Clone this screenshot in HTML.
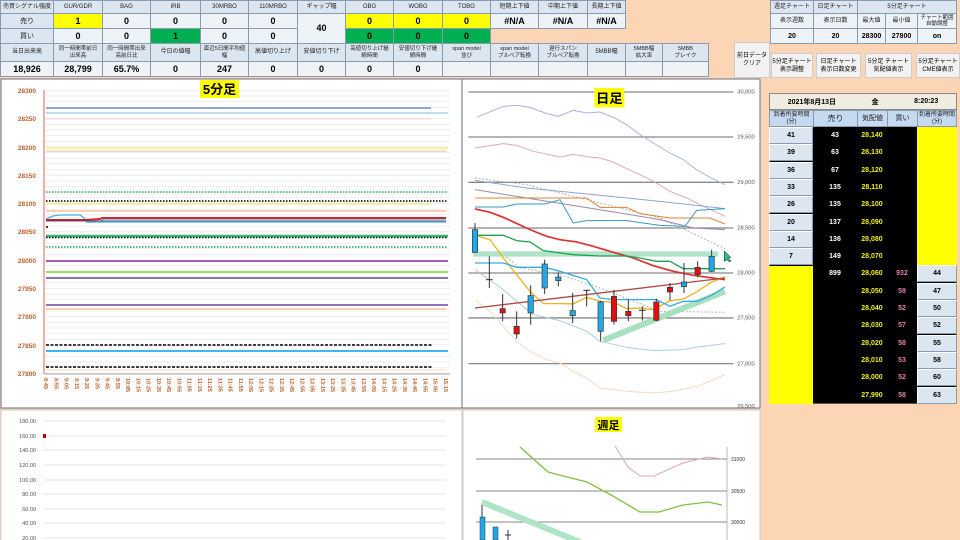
<!DOCTYPE html>
<html><head><meta charset="utf-8"><style>
*{margin:0;padding:0;box-sizing:border-box}
body{width:960px;height:540px;overflow:hidden;background:#fcd5b4;font-family:"Liberation Sans","Noto Sans CJK JP",sans-serif;position:relative}
.c{position:absolute;border:1px solid #8a9ab0;background:#dce6f1;display:flex;align-items:center;justify-content:center;text-align:center;font-size:6px;line-height:7px;color:#222;overflow:hidden}
.v{font-size:9px;font-weight:bold;color:#000}
.y{background:#ffff00}.g{background:#00b050}.w{background:#eef3f8}
.btn{position:absolute;background:#f2f2f2;border:1px solid #ccc;font-size:6px;line-height:8px;display:flex;align-items:center;justify-content:center;text-align:center}
.ob{position:absolute;font-size:7px;font-weight:bold;display:flex;align-items:center;justify-content:center}
.s{font-size:5.5px;line-height:6.5px}
</style></head><body>
<svg width="960" height="540" style="position:absolute;left:0;top:0">
<defs>
<pattern id="gd" x="0" y="90" width="4" height="5.66" patternUnits="userSpaceOnUse"><line x1="0" y1="0.3" x2="4" y2="0.3" stroke="#e2e2e2" stroke-width="0.6"/></pattern>
</defs>
<rect x="1" y="79" width="461" height="329" fill="#fff" stroke="#6a7080"/>
<rect x="45" y="90" width="405" height="284" fill="url(#gd)"/>
<line x1="44" y1="90" x2="44" y2="374" stroke="#e06060" stroke-width="1"/>
<line x1="44" y1="374" x2="450" y2="374" stroke="#aaa"/>
<g stroke-width="1.6" fill="none">
<line x1="46" y1="108" x2="431" y2="108" stroke="#7090c0"/>
<line x1="46" y1="113" x2="448" y2="113" stroke="#a8d0f0"/>
<line x1="46" y1="119" x2="431" y2="119" stroke="#f0c8e8" stroke-width="1"/>
<line x1="46" y1="148" x2="448" y2="148" stroke="#f8f080"/>
<line x1="46" y1="151" x2="446" y2="151" stroke="#f4c8a0" stroke-width="1.2"/>
<line x1="46" y1="192" x2="448" y2="192" stroke="#20b060" stroke-dasharray="1.5,1.5"/>
<line x1="46" y1="201" x2="448" y2="201" stroke="#000" stroke-dasharray="1.5,1.5"/>
<line x1="46" y1="204" x2="431" y2="204" stroke="#f0f090"/>
<line x1="46" y1="211" x2="446" y2="211" stroke="#f4c0a0"/>
<polyline points="46,219 53,216 60,215 80,215 84,218 88,222 100,222 104,219 446,219" stroke="#40b0e8" stroke-width="1.3"/>
<polyline points="46,220 86,220 100,219 102,218 446,218" stroke="#e02020" stroke-width="2"/>
<line x1="46" y1="221" x2="446" y2="221" stroke="#203060" stroke-width="0.8"/>
<line x1="86" y1="222" x2="446" y2="222" stroke="#40b0e8" stroke-width="1.3"/>
<line x1="46" y1="236" x2="448" y2="236" stroke="#30c070" stroke-width="2.4"/>
<line x1="46" y1="237.5" x2="448" y2="237.5" stroke="#000" stroke-dasharray="1.5,1.5"/>
<line x1="46" y1="247" x2="448" y2="247" stroke="#20b060" stroke-dasharray="1.5,1.5"/>
<line x1="46" y1="261" x2="448" y2="261" stroke="#a060c0" stroke-width="2"/>
<line x1="46" y1="272" x2="448" y2="272" stroke="#a0e060" stroke-width="2"/>
<line x1="46" y1="278" x2="448" y2="278" stroke="#9070c0" stroke-width="2"/>
<line x1="46" y1="305" x2="448" y2="305" stroke="#9070c0" stroke-width="2"/>
<line x1="46" y1="309" x2="446" y2="309" stroke="#f0a060" stroke-width="1"/>
<line x1="46" y1="345" x2="432" y2="345" stroke="#000" stroke-dasharray="3,1.5"/>
<line x1="46" y1="351" x2="448" y2="351" stroke="#40b8e8" stroke-width="2"/>
<line x1="46" y1="367" x2="432" y2="367" stroke="#000" stroke-dasharray="3,1.5"/>
<line x1="46" y1="370" x2="446" y2="370" stroke="#f8d8c0" stroke-width="1"/>
<line x1="46" y1="227" x2="48" y2="227" stroke="#000" stroke-width="1.5"/>
</g>
<g font-size="6.5" fill="#c0602a" font-weight="bold" text-anchor="end">
<text x="36" y="93">28300</text><text x="36" y="121">28250</text><text x="36" y="150">28200</text><text x="36" y="178">28150</text><text x="36" y="206">28100</text><text x="36" y="234">28050</text><text x="36" y="263">28000</text><text x="36" y="291">27950</text><text x="36" y="319">27900</text><text x="36" y="348">27850</text><text x="36" y="376">27800</text>
</g>
<g font-size="5.5" fill="#c0602a" font-weight="bold" id="tl"></g>
<rect x="200" y="80" width="39" height="18" fill="#ffff00"/>
<text x="219.5" y="94" font-size="13" font-weight="bold" text-anchor="middle">5分足</text>

<rect x="462" y="79" width="298" height="329" fill="#fff" stroke="#6a7080"/>
<g transform="translate(460,78) scale(0.3333)" fill="none" stroke-width="3">
<g stroke="#888" stroke-width="4">
<line x1="25" y1="42" x2="820" y2="42"/><line x1="25" y1="177" x2="820" y2="177"/><line x1="25" y1="313" x2="820" y2="313"/><line x1="25" y1="450" x2="820" y2="450"/><line x1="25" y1="585" x2="820" y2="585"/><line x1="25" y1="720" x2="820" y2="720"/><line x1="25" y1="857" x2="820" y2="857"/>
</g>
<polyline stroke="#a8b4dc" points="50,118 130,85 175,82 215,90 255,105 295,115 340,97 380,105 420,102 460,118 500,140 540,170 580,195 630,225 670,245 710,275 750,298 795,320"/>
<polyline stroke="#dca8b8" points="45,210 130,197 170,202 220,220 300,237 340,229 380,236 420,240 460,252 500,272 540,290 580,310 630,340 680,360 720,380 795,415"/>
<polyline stroke="#aaa" stroke-dasharray="5,6" points="45,300 200,320 400,370 600,420 795,512"/>
<polyline stroke="#8ea6d0" points="45,307 200,330 400,350 600,370 795,392"/>
<polyline stroke="#9a88b0" points="45,335 200,360 450,400 600,425 700,450 795,455"/>
<polyline stroke="#e08030" points="45,360 380,360 420,388 500,388 540,407 630,420 750,420 795,438"/>
<polyline stroke="#3898c0" points="45,387 130,387 170,378 255,378 300,365 340,435 380,428 500,428 600,442 675,445 710,397 795,392"/>
<polyline stroke="#f8d8c0" points="45,665 90,700 130,745 170,790 210,820 260,845 300,855 340,880 380,900 420,930 500,940 580,945 640,940 713,925 795,890"/>
<polyline stroke="#a8d0dc" points="45,575 130,635 170,670 220,710 300,728 380,760 420,790 500,808 580,818 670,815 713,807 795,797"/>
<polyline stroke="#aaa" stroke-dasharray="5,6" points="130,530 180,570 300,590 420,630 600,700 795,703"/>
<rect x="40" y="520" width="735" height="16" fill="#b0e4c8" stroke="none"/>
<line x1="430" y1="787" x2="795" y2="640" stroke="#a8e0c0" stroke-width="18"/>
<polyline stroke="#e03030" stroke-width="5" points="45,393 90,403 130,418 210,455 260,475 300,485 350,492 400,505 460,523 520,540 580,563 640,580 700,592 795,605"/>
<polyline stroke="#20a050" stroke-width="4" points="45,472 130,472 170,488 210,492 250,518 340,530 420,534 500,534 540,540 590,550 630,550 670,572 795,572"/>
<polyline stroke="#f0b020" stroke-width="4" points="45,472 90,485 130,540 170,590 210,640 250,677 300,677 340,678 380,658 420,670 460,672 500,692 540,690 580,695 630,668 670,663 713,640 755,612 795,597"/>
<polyline stroke="#30b0e0" stroke-width="4" points="45,555 130,555 170,568 255,568 300,580 380,605 420,660 460,665 500,665 590,665 630,685 670,670 713,670 755,652 795,627"/>
<line x1="45" y1="690" x2="795" y2="600" stroke="#b04848" stroke-width="4"/>
<g stroke="#333" stroke-width="3">
<line x1="45" y1="435" x2="45" y2="525"/><line x1="88" y1="535" x2="88" y2="630"/><line x1="128" y1="648" x2="128" y2="730"/><line x1="170" y1="700" x2="170" y2="782"/><line x1="212" y1="622" x2="212" y2="740"/><line x1="254" y1="545" x2="254" y2="648"/><line x1="295" y1="583" x2="295" y2="625"/><line x1="338" y1="645" x2="338" y2="735"/><line x1="380" y1="635" x2="380" y2="685"/><line x1="422" y1="668" x2="422" y2="790"/><line x1="462" y1="636" x2="462" y2="740"/><line x1="505" y1="665" x2="505" y2="730"/><line x1="547" y1="685" x2="547" y2="728"/><line x1="589" y1="662" x2="589" y2="730"/><line x1="630" y1="615" x2="630" y2="668"/><line x1="672" y1="555" x2="672" y2="645"/><line x1="713" y1="550" x2="713" y2="598"/><line x1="755" y1="515" x2="755" y2="582"/>
<line x1="78" y1="605" x2="98" y2="605"/><line x1="370" y1="637" x2="390" y2="637"/><line x1="537" y1="697" x2="557" y2="697"/>
</g>
<g stroke="#333" stroke-width="2">
<rect x="37" y="455" width="16" height="68" fill="#20a8e8"/><rect x="120" y="692" width="16" height="13" fill="#e01010"/><rect x="162" y="745" width="16" height="23" fill="#e01010"/><rect x="204" y="653" width="16" height="52" fill="#20a8e8"/><rect x="246" y="558" width="16" height="72" fill="#20a8e8"/><rect x="287" y="597" width="16" height="11" fill="#20a8e8"/><rect x="330" y="698" width="16" height="15" fill="#20a8e8"/><rect x="414" y="672" width="16" height="88" fill="#20a8e8"/><rect x="454" y="655" width="16" height="75" fill="#e01010"/><rect x="497" y="700" width="16" height="13" fill="#e01010"/><rect x="581" y="672" width="16" height="55" fill="#e01010"/><rect x="622" y="628" width="16" height="14" fill="#e01010"/><rect x="664" y="612" width="16" height="14" fill="#20a8e8"/><rect x="705" y="568" width="16" height="22" fill="#e01010"/><rect x="747" y="535" width="16" height="45" fill="#20a8e8"/>
</g>
<polygon points="793,520 793,550 800,545 810,552 812,548 804,541 812,538" fill="#30c090" stroke="#206050" stroke-width="2"/>
<rect x="403" y="30" width="90" height="58" fill="#ffff00" stroke="none"/>
<text x="448" y="75" font-size="40" font-weight="bold" fill="#000" stroke="none" text-anchor="middle">日足</text>
<g font-size="17" fill="#555" stroke="none"><text x="832" y="47">30,000</text><text x="832" y="182">29,500</text><text x="832" y="318">29,000</text><text x="832" y="455">28,500</text><text x="832" y="590">28,000</text><text x="832" y="725">27,500</text><text x="832" y="862">27,000</text><text x="832" y="990">26,500</text></g>
</g>

<rect x="1" y="410" width="461" height="132" fill="#fff" stroke="#ccc"/>
<g stroke="#ddd" stroke-width="0.8">
<line x1="44" y1="421" x2="446" y2="421"/><line x1="44" y1="436" x2="446" y2="436"/><line x1="44" y1="450" x2="446" y2="450"/><line x1="44" y1="465" x2="446" y2="465"/><line x1="44" y1="480" x2="446" y2="480"/><line x1="44" y1="494" x2="446" y2="494"/><line x1="44" y1="509" x2="446" y2="509"/><line x1="44" y1="523" x2="446" y2="523"/><line x1="44" y1="538" x2="446" y2="538"/>
</g>
<g font-size="5.5" fill="#555" text-anchor="end"><text x="36" y="423">180.00</text><text x="36" y="438">160.00</text><text x="36" y="452">140.00</text><text x="36" y="467">120.00</text><text x="36" y="482">100.00</text><text x="36" y="496">80.00</text><text x="36" y="511">60.00</text><text x="36" y="525">40.00</text><text x="36" y="540">20.00</text></g>
<rect x="43" y="434" width="3" height="4" fill="#c00000"/>

<rect x="463" y="410" width="297" height="132" fill="#fff" stroke="#ccc"/>
<g stroke="#888" stroke-width="1"><line x1="476" y1="459" x2="727" y2="459"/><line x1="476" y1="491" x2="727" y2="491"/><line x1="476" y1="522" x2="727" y2="522"/></g>
<line x1="727" y1="447" x2="727" y2="540" stroke="#888" stroke-width="0.6"/>
<g font-size="5" fill="#333"><text x="731" y="461">31000</text><text x="731" y="493">30500</text><text x="731" y="524">30000</text></g>
<line x1="482" y1="502" x2="587" y2="545" stroke="#b0e4c8" stroke-width="6"/>
<polyline fill="none" stroke="#80c040" stroke-width="1.3" points="520,447 548,472 567,477 587,482 611,495 640,512 659,512 683,505 708,502 722,505"/>
<polyline fill="none" stroke="#dca8b0" stroke-width="1" points="615,446 628,467 640,476 654,476 683,463 708,457 722,459"/>
<line x1="482" y1="505" x2="482" y2="540" stroke="#333"/>
<rect x="480" y="517" width="5" height="23" fill="#20a8e8" stroke="#333" stroke-width="0.5"/>
<rect x="493" y="527" width="5" height="13" fill="#20a8e8" stroke="#333" stroke-width="0.5"/>
<line x1="508" y1="530" x2="508" y2="540" stroke="#333"/><line x1="505" y1="535" x2="511" y2="535" stroke="#333"/>
<rect x="595" y="417" width="27" height="15" fill="#ffff00"/>
<text x="608.5" y="429" font-size="11" font-weight="bold" text-anchor="middle">週足</text>
</svg>
<script>
(function(){var g=document.getElementById('tl'),s='',t=8*60+45;for(var i=0;i<40;i++){var h=Math.floor(t/60),m=t%60;var lab=h+':'+(m<10?'0':'')+m;var x=46+i*10.25;s+='<text transform="translate('+(x-2)+',378) rotate(90)">'+lab+'</text>';t+=10;}g.innerHTML=s;})();
</script>

<div class="c" style="left:0;top:0;width:54px;height:14px">売買シグナル強度</div>
<div class="c" style="left:53px;top:0;width:50px;height:14px">GUR/GDR</div>
<div class="c" style="left:102px;top:0;width:49px;height:14px">BAG</div>
<div class="c" style="left:150px;top:0;width:51px;height:14px">IRB</div>
<div class="c" style="left:200px;top:0;width:49px;height:14px">30MRBO</div>
<div class="c" style="left:248px;top:0;width:50px;height:14px">110MRBO</div>
<div class="c" style="left:297px;top:0;width:49px;height:14px">ギャップ幅</div>
<div class="c" style="left:345px;top:0;width:49px;height:14px">OBG</div>
<div class="c" style="left:393px;top:0;width:50px;height:14px">WOBG</div>
<div class="c" style="left:442px;top:0;width:49px;height:14px">TOBG</div>
<div class="c" style="left:490px;top:0;width:49px;height:14px">短期上下値</div>
<div class="c" style="left:538px;top:0;width:50px;height:14px">中期上下値</div>
<div class="c" style="left:587px;top:0;width:39px;height:14px">長期上下値</div>

<div class="c" style="left:0;top:13px;width:54px;height:16px;font-size:7px">売り</div>
<div class="c v y" style="left:53px;top:13px;width:50px;height:16px">1</div>
<div class="c v w" style="left:102px;top:13px;width:49px;height:16px">0</div>
<div class="c v w" style="left:150px;top:13px;width:51px;height:16px">0</div>
<div class="c v w" style="left:200px;top:13px;width:49px;height:16px">0</div>
<div class="c v w" style="left:248px;top:13px;width:50px;height:16px">0</div>
<div class="c v w" style="left:297px;top:13px;width:49px;height:31px">40</div>
<div class="c v y" style="left:345px;top:13px;width:49px;height:16px">0</div>
<div class="c v y" style="left:393px;top:13px;width:50px;height:16px">0</div>
<div class="c v y" style="left:442px;top:13px;width:49px;height:16px">0</div>
<div class="c v w" style="left:490px;top:13px;width:49px;height:16px">#N/A</div>
<div class="c v w" style="left:538px;top:13px;width:50px;height:16px">#N/A</div>
<div class="c v w" style="left:587px;top:13px;width:39px;height:16px">#N/A</div>

<div class="c" style="left:0;top:28px;width:54px;height:16px;font-size:7px">買い</div>
<div class="c v w" style="left:53px;top:28px;width:50px;height:16px">0</div>
<div class="c v w" style="left:102px;top:28px;width:49px;height:16px">0</div>
<div class="c v g" style="left:150px;top:28px;width:51px;height:16px">1</div>
<div class="c v w" style="left:200px;top:28px;width:49px;height:16px">0</div>
<div class="c v w" style="left:248px;top:28px;width:50px;height:16px">0</div>
<div class="c v g" style="left:345px;top:28px;width:49px;height:16px">0</div>
<div class="c v g" style="left:393px;top:28px;width:50px;height:16px">0</div>
<div class="c v g" style="left:442px;top:28px;width:49px;height:16px">0</div>

<div class="c" style="left:0;top:43px;width:54px;height:19px">当日出来高</div>
<div class="c s" style="left:53px;top:43px;width:50px;height:19px">同一時間帯前日<br>出来高</div>
<div class="c s" style="left:102px;top:43px;width:49px;height:19px">同一時間帯出来<br>高前日比</div>
<div class="c" style="left:150px;top:43px;width:51px;height:19px">今日の値幅</div>
<div class="c s" style="left:200px;top:43px;width:49px;height:19px">直近5日間平均値<br>幅</div>
<div class="c" style="left:248px;top:43px;width:50px;height:19px">高値切り上げ</div>
<div class="c" style="left:297px;top:43px;width:49px;height:19px">安値切り下げ</div>
<div class="c s" style="left:345px;top:43px;width:49px;height:19px">高値切り上げ継<br>続時間</div>
<div class="c s" style="left:393px;top:43px;width:50px;height:19px">安値切り下げ継<br>続時間</div>
<div class="c s" style="left:442px;top:43px;width:49px;height:19px">span model<br>並び</div>
<div class="c s" style="left:490px;top:43px;width:49px;height:19px">span model<br>ブルベア転換</div>
<div class="c s" style="left:538px;top:43px;width:50px;height:19px">遅行スパン<br>ブルベア転換</div>
<div class="c" style="left:587px;top:43px;width:39px;height:19px">5MBB幅</div>
<div class="c s" style="left:625px;top:43px;width:38px;height:19px">5MBB幅<br>拡大率</div>
<div class="c s" style="left:662px;top:43px;width:47px;height:19px">5MBB<br>ブレイク</div>

<div class="c v w" style="left:0;top:61px;width:54px;height:16px">18,926</div>
<div class="c v w" style="left:53px;top:61px;width:50px;height:16px">28,799</div>
<div class="c v w" style="left:102px;top:61px;width:49px;height:16px">65.7%</div>
<div class="c v w" style="left:150px;top:61px;width:51px;height:16px">0</div>
<div class="c v w" style="left:200px;top:61px;width:49px;height:16px">247</div>
<div class="c v w" style="left:248px;top:61px;width:50px;height:16px">0</div>
<div class="c v w" style="left:297px;top:61px;width:49px;height:16px">0</div>
<div class="c v w" style="left:345px;top:61px;width:49px;height:16px">0</div>
<div class="c v w" style="left:393px;top:61px;width:50px;height:16px">0</div>
<div class="c v w" style="left:442px;top:61px;width:49px;height:16px"></div>
<div class="c v w" style="left:490px;top:61px;width:49px;height:16px"></div>
<div class="c v w" style="left:538px;top:61px;width:50px;height:16px"></div>
<div class="c v w" style="left:587px;top:61px;width:39px;height:16px"></div>
<div class="c v w" style="left:625px;top:61px;width:38px;height:16px"></div>
<div class="c v w" style="left:662px;top:61px;width:47px;height:16px"></div>

<div class="c" style="left:770px;top:0;width:44px;height:14px">週足チャート</div>
<div class="c" style="left:813px;top:0;width:45px;height:14px">日足チャート</div>
<div class="c" style="left:857px;top:0;width:100px;height:14px">5分足チャート</div>
<div class="c w" style="left:770px;top:13px;width:44px;height:16px">表示週数</div>
<div class="c w" style="left:813px;top:13px;width:45px;height:16px">表示日数</div>
<div class="c w" style="left:857px;top:13px;width:29px;height:16px">最大値</div>
<div class="c w" style="left:885px;top:13px;width:33px;height:16px">最小値</div>
<div class="c w s" style="left:917px;top:13px;width:40px;height:16px">チャート範囲<br>自動調整</div>
<div class="c v w" style="left:770px;top:28px;width:44px;height:16px;font-size:7px">20</div>
<div class="c v w" style="left:813px;top:28px;width:45px;height:16px;font-size:7px">20</div>
<div class="c v w" style="left:857px;top:28px;width:29px;height:16px;font-size:7px">28300</div>
<div class="c v w" style="left:885px;top:28px;width:33px;height:16px;font-size:7px">27800</div>
<div class="c v w" style="left:917px;top:28px;width:40px;height:16px;font-size:7px">on</div>

<div class="btn" style="left:734px;top:42px;width:36px;height:36px">前日データ<br>クリア</div>
<div class="btn" style="left:771px;top:53px;width:42px;height:25px">5分足チャート<br>表示調整</div>
<div class="btn" style="left:816px;top:53px;width:45px;height:25px">日足チャート<br>表示日数変更</div>
<div class="btn" style="left:865px;top:53px;width:47px;height:25px">5分足 チャート<br>気配値表示</div>
<div class="btn" style="left:916px;top:53px;width:44px;height:25px">5分足チャート<br>CME値表示</div>

<div style="position:absolute;left:769px;top:93px;width:188px;height:311px;background:#000;border:1px solid #555"></div>
<div class="ob" style="left:769px;top:93px;width:188px;height:17px;background:#efece0;border:1px solid #888;justify-content:space-around;font-size:7px"><span>2021年8月13日</span><span>金</span><span>8:20:23</span></div>
<div class="c" style="left:769px;top:110px;width:45px;height:17px;background:#c5d9f1">到着所要時間<br>(分)</div>
<div class="c" style="left:813px;top:110px;width:45px;height:17px;background:#c5d9f1;font-size:8px">売り</div>
<div class="c" style="left:857px;top:110px;width:31px;height:17px;background:#c5d9f1;font-size:7px">気配値</div>
<div class="c" style="left:887px;top:110px;width:31px;height:17px;background:#c5d9f1;font-size:7px">買い</div>
<div class="c" style="left:917px;top:110px;width:40px;height:17px;background:#c5d9f1">到着所要時間<br>(分)</div>
<div style="position:absolute;left:769px;top:266px;width:44px;height:138px;background:#ffff00"></div>
<div style="position:absolute;left:917px;top:127px;width:40px;height:139px;background:#ffff00"></div>
<div id="ob"></div>
<script>
(function(){var L=[41,39,36,33,26,20,14,7],R=[44,47,50,52,55,58,60,63],S=[43,63,67,135,135,137,136,149,899],P=['28,140','28,130','28,120','28,110','28,100','28,090','28,080','28,070','28,060','28,050','28,040','28,030','28,020','28,010','28,000','27,990'],B=[932,59,52,57,58,53,52,58],h='';
for(var i=0;i<16;i++){var y=127+i*17.3;
if(i<8)h+='<div class="c v" style="left:769px;top:'+y+'px;width:44px;height:17px;font-size:7px;border-color:#fff #8a9ab0 #8a9ab0 #fff">'+L[i]+'</div>';
else h+='<div class="c v" style="left:917px;top:'+y+'px;width:40px;height:17px;font-size:7px;border-color:#fff #8a9ab0 #8a9ab0 #fff">'+R[i-8]+'</div>';
if(i<9)h+='<div class="ob" style="left:813px;top:'+y+'px;width:44px;height:17px;color:#fff">'+S[i]+'</div>';
h+='<div class="ob" style="left:857px;top:'+y+'px;width:30px;height:17px;color:#f0f000">'+P[i]+'</div>';
if(i>=8)h+='<div class="ob" style="left:887px;top:'+y+'px;width:30px;height:17px;color:#e080b0">'+B[i-8]+'</div>';}
document.getElementById('ob').innerHTML=h;})();
</script>
</body></html>
